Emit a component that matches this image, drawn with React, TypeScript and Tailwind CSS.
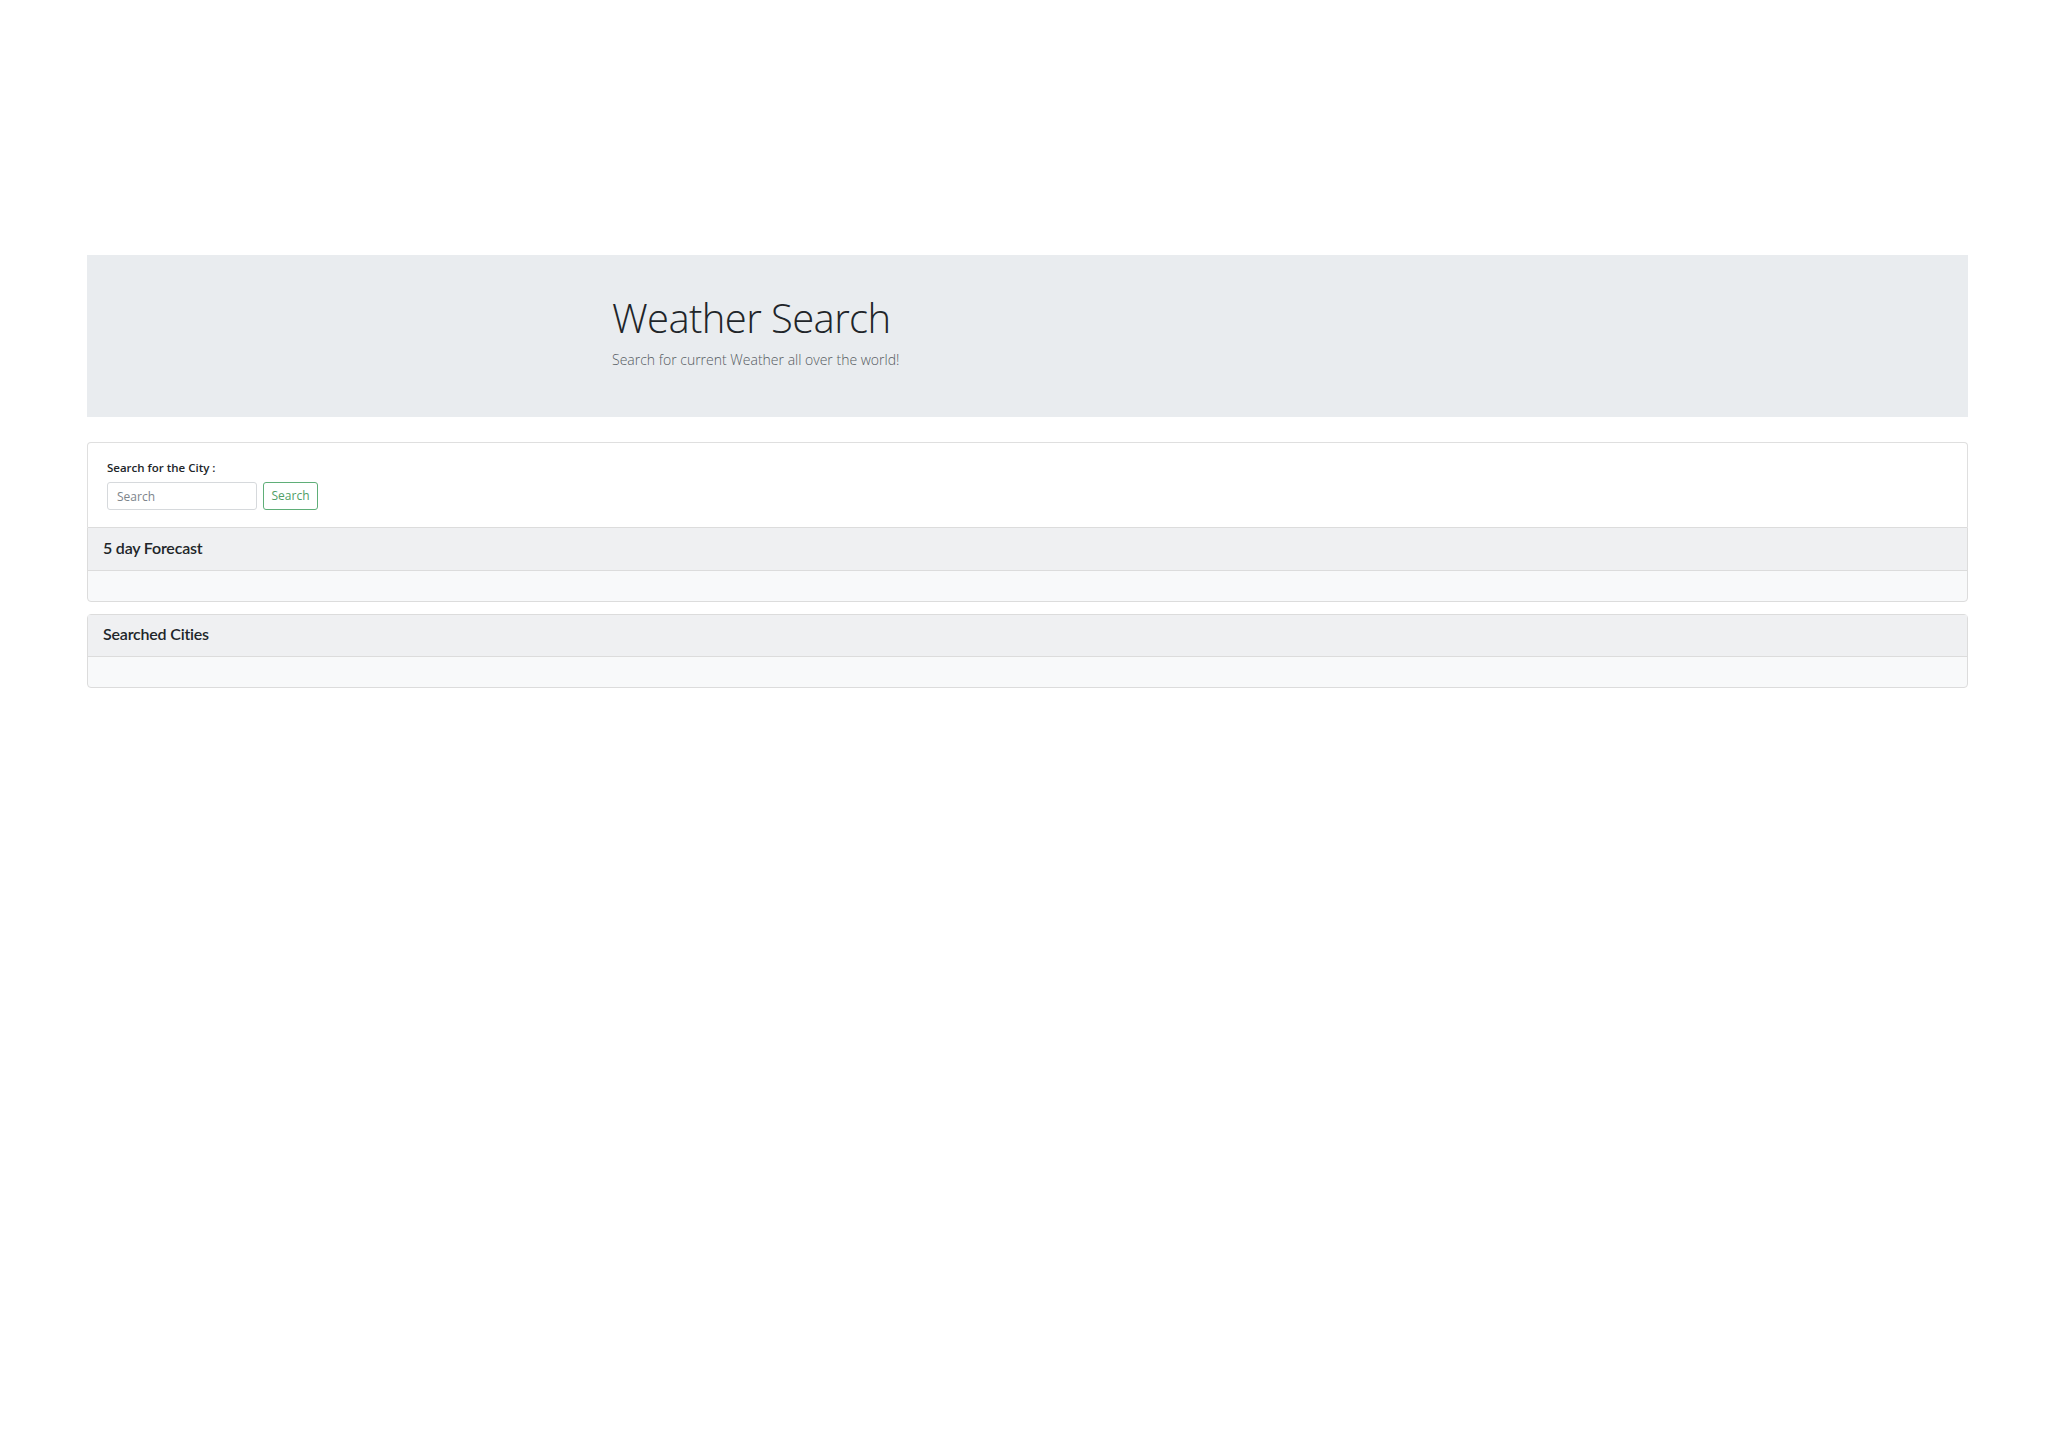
import React from "react";

export default function App() {
  return (
    <div className="min-h-[1448px] bg-white pt-[255px]" style={{ fontFamily: '"Open Sans", "Noto Sans", sans-serif' }}>
      <div className="ml-[87px] w-[1881px]">
        <div className="h-[162px] bg-[#e9ecef] pl-[525px] pt-[37px]">
          <h1 className="text-[40px] font-light leading-[52px] text-[#212529] tracking-[-0.6px]">Weather Search</h1>
          <p className="mt-[6px] text-[14px] font-light text-[#555b61] leading-[20px]">Search for current Weather all over the world!</p>
        </div>

        <div className="mt-[25px] rounded-t-[4px] border border-[#dfdfdf] border-b-0 bg-white px-[19px] pt-[17px] pb-[17px]">
          <label className="block text-[11.5px] font-semibold leading-[16px] text-[#212529]">Search for the City :</label>
          <div className="mt-[6px] flex items-center gap-[6px]">
            <input
              className="h-[28px] w-[150px] rounded-[3px] border border-[#d6d9dc] px-[9px] text-[12px] text-[#495057] placeholder-[#7d848b] outline-none"
              placeholder="Search"
            />
            <button className="h-[28px] w-[55px] rounded-[3px] border border-[#5fae78] bg-white text-[12px] text-[#4f9e66]">Search</button>
          </div>
        </div>

        <div className="rounded-b-[4px] border border-[#dcdcdc] bg-[#f8f9fa]">
          <div className="flex h-[43px] items-center border-b border-[#dcdcdc] bg-[#eff0f2] px-[15px] pb-[2px] text-[16px] font-semibold tracking-[-0.2px] text-[#212529]" style={{ fontFamily: '"Lato", "Open Sans", sans-serif' }}>5 day Forecast</div>
          <div className="h-[30px]"></div>
        </div>

        <div className="mt-[12px] rounded-[4px] border border-[#dcdcdc] bg-[#f8f9fa]">
          <div className="flex h-[42px] items-center border-b border-[#dcdcdc] bg-[#eff0f2] px-[15px] pb-[3px] text-[16px] font-semibold tracking-[-0.2px] text-[#212529]" style={{ fontFamily: '"Lato", "Open Sans", sans-serif' }}>Searched Cities</div>
          <div className="h-[30px]"></div>
        </div>
      </div>
    </div>
  );
}
